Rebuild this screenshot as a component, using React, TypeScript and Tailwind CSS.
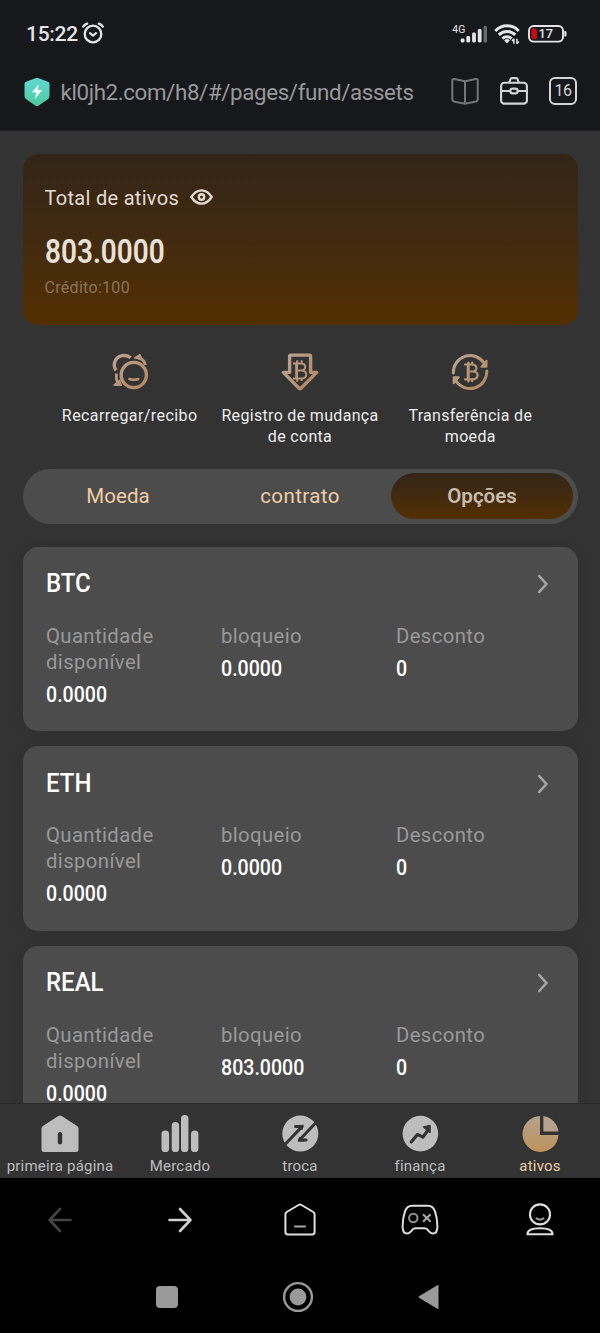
import { useState } from "react"

type Asset = {
  name: string
  available: string
  locked: string
  discount: string
}

const assets: Asset[] = [
  { name: "BTC", available: "0.0000", locked: "0.0000", discount: "0" },
  { name: "ETH", available: "0.0000", locked: "0.0000", discount: "0" },
  { name: "REAL", available: "0.0000", locked: "803.0000", discount: "0" },
]

const tabs = [
  { label: "Moeda", className: "tracking-[0.1px]" },
  { label: "contrato", className: "tracking-[0.4px]" },
  { label: "Opções", className: "tracking-[0px]" },
]

function StatusBar() {
  return (
    <div className="flex h-[68px] items-center justify-between pl-[26px] pr-[33px] text-[#e4e4e6]">
      <div className="flex items-center gap-[3px]">
        <span className="text-[21px] leading-none font-medium tracking-[-0.3px]">15:22</span>
        <svg className="-mt-0.5" width="24" height="22" viewBox="0 0 24 22" fill="none" stroke="currentColor" strokeWidth="2.3" strokeLinecap="round">
          <circle cx="12" cy="12" r="8.3" />
          <path d="M2.2 4.6Q3.6 2.4 6.2 1.6M21.8 4.6Q20.4 2.4 17.8 1.6" />
          <path d="m9 11.2 3 2.4 3-2.4" />
        </svg>
      </div>
      <div className="flex items-center">
        <svg width="36" height="22" viewBox="0 0 36 22" fill="currentColor">
          <text x="0.3" y="9.6" fontSize="10.4" fontFamily="Roboto, sans-serif">4G</text>
          <rect x="8.6" y="15.5" width="4" height="4" rx="1.4" />
          <rect x="14.3" y="13" width="3.8" height="6.5" rx="1.4" />
          <rect x="20.1" y="9.5" width="3.8" height="10" rx="1.4" />
          <rect x="25.8" y="6" width="3.8" height="13.5" rx="1.4" />
          <rect x="31.6" y="3" width="3.4" height="16.5" rx="1.2" fill="#68696c" />
        </svg>
        <svg className="ml-1.5" width="26" height="22" viewBox="0 0 26 22" fill="none" stroke="currentColor" strokeWidth="3">
          <path d="M1.3 7.9a16 16 0 0 1 23.4 0" />
          <path d="M4.8 11.9a11.4 11.4 0 0 1 16.4 0" />
          <path d="M8.4 15.6a6.5 6.5 0 0 1 9.2 0" />
          <path d="M10.2 17.4a4 4 0 0 1 5.6 0L13 20.6z" fill="currentColor" stroke="none" />
          <path d="M19.9 20.8v-5M22.9 15.8v5M18 18l1.9-2.2M24.8 18.6l-1.9 2.2" strokeWidth="1.5" />
        </svg>
        <svg className="ml-[8px]" width="39" height="18" viewBox="0 0 39 18" fill="none">
          <rect x="1" y="1" width="34" height="15.6" rx="4.5" stroke="currentColor" strokeWidth="1.9" />
          <path d="M36.3 6h1q1.2 0 1.2 1v3.6q0 1-1.2 1h-1z" fill="currentColor" />
          <rect x="3.4" y="3.4" width="5.4" height="10.8" rx="2" fill="#d0090d" />
          <text x="10.6" y="13.4" fontSize="12.8" fontWeight="500" fill="currentColor" fontFamily="Roboto, sans-serif">17</text>
        </svg>
      </div>
    </div>
  )
}

function AddressBar() {
  return (
    <div className="flex h-[48px] items-center pl-[23.5px] pr-[23px]">
      <svg width="26" height="30" viewBox="0 0 26 30">
        <defs>
          <linearGradient id="shield" x1="0" y1="0" x2="0" y2="1">
            <stop offset="0" stopColor="#62d8d6" />
            <stop offset="1" stopColor="#4ccb9d" />
          </linearGradient>
        </defs>
        <path d="M11.4 1.2q1.6-.8 3.2 0l9.4 3.6q1.5.6 1.5 2.2v12q0 1.8-1.4 2.9l-9.3 6.5q-1.8 1.2-3.6 0l-9.3-6.5Q.5 20.8.5 19V7q0-1.6 1.5-2.2z" fill="url(#shield)" />
        <path d="M14.6 7.2 7.8 15.6h4.3l-1.4 6.8 7.6-9.4h-4.4z" fill="#eefaf7" />
      </svg>
      <span className="ml-[11px] text-[22.3px] leading-none tracking-[-0.36px] whitespace-nowrap text-[#98999b]">kl0jh2.com/h8/#/pages/fund/assets</span>
      <div className="-mt-0.5 ml-auto flex items-center gap-[21px] text-[#d4d4d6]">
        <svg width="28" height="28" viewBox="0 0 28 28" fill="none" stroke="#757678" strokeWidth="2" strokeLinejoin="round">
          <path d="M14 4.3 3 2Q1.3 1.8 1.3 3.6v19q0 1.4 1.5 1.8L14 26.8l11.2-2.4q1.5-.4 1.5-1.8v-19Q26.7 1.8 25 2z" />
          <path d="M14 4.3v22.5" />
        </svg>
        <svg width="28" height="28" viewBox="0 0 28 28" fill="none" stroke="currentColor" strokeWidth="2.1">
          <rect x="1.1" y="5.8" width="25.8" height="20.8" rx="3.2" />
          <path d="M9.2 5.8 10.5 2q.3-.9 1.3-.9h4.4q1 0 1.3.9l1.3 3.8M1 14h9.5M17.5 14H27" />
          <rect x="10.4" y="11.6" width="7.2" height="4.8" rx="2.2" />
        </svg>
        <div className="flex size-7 items-center justify-center rounded-[6px] border-2 border-[#d4d4d6] text-[16px] leading-none tracking-[-0.6px]">
          16
        </div>
      </div>
    </div>
  )
}

function BalanceCard() {
  const [visible, setVisible] = useState(true)

  return (
    <div className="h-[171px] rounded-[15px] bg-linear-to-b from-[#322517] to-[#532f00] pt-[32px] pl-[22px]">
      <div className="flex h-6 items-center gap-[11px] text-[#e2dbd2]">
        <span className="text-[20px] leading-6 tracking-[0.3px]">Total de ativos</span>
        <button className="-mt-[3px]" onClick={() => setVisible(!visible)}>
          <svg width="23" height="16" viewBox="0 0 23 16" fill="none" stroke="currentColor" strokeWidth="2.4">
            <path d="M1.4 8Q5.5 1.4 11.5 1.4T21.6 8Q17.5 14.6 11.5 14.6T1.4 8z" />
            <circle cx="11.5" cy="8" r="2.7" />
          </svg>
        </button>
      </div>
      <div className="mt-[24px] h-9 origin-left scale-x-86 text-[32.5px] leading-9 font-semibold text-[#e8e1da]">
        {visible ? "803.0000" : "******"}
      </div>
      <div className="mt-2 text-[16px] leading-5 tracking-[0.3px] text-[#89745c]">Crédito:100</div>
    </div>
  )
}

function CoinGradient({ id }: { id: string }) {
  return (
    <defs>
      <linearGradient id={id} x1="0" y1="0" x2="38" y2="38" gradientUnits="userSpaceOnUse">
        <stop offset="0.15" stopColor="#b9a08c" />
        <stop offset="1" stopColor="#b1865a" />
      </linearGradient>
    </defs>
  )
}

function RechargeIcon() {
  return (
    <svg width="38" height="38" viewBox="0 0 38 38" fill="none" stroke="url(#g1)" strokeWidth="3.4" strokeLinejoin="round">
      <CoinGradient id="g1" />
      <circle cx="22.8" cy="22" r="12.6" />
      <path d="M18.4 26q4.4 1.6 8.8 0" strokeWidth="2.6" strokeLinecap="round" />
      <path d="M5 17.4A9.6 9.6 0 0 1 3.6 9.6q1.4-5.8 7.6-7 5.2-.8 8.4 2.2" />
      <path d="M5.4 20.5q-.6 5.5 1.2 9.5" strokeWidth="2.8" />
      <path d="M3.2 32.2h7l-1.6-5z" fill="url(#g1)" strokeWidth="1.6" />
      <path d="M27 5q6 .8 7.4 7" strokeWidth="3" />
      <path d="m23.8 5 5.2-3.2 1.4 4z" fill="url(#g1)" strokeWidth="1.6" />
    </svg>
  )
}

function RecordIcon() {
  return (
    <svg width="38" height="38" viewBox="0 0 38 38" fill="none" stroke="url(#g2)" strokeWidth="3.4" strokeLinejoin="round">
      <CoinGradient id="g2" />
      <path d="M8.6 3.3q0-1.2 1.2-1.2h18.6q1.2 0 1.2 1.2V19.4h6.2L20 35.2q-1 .9-2 0L2.4 19.4h6.2z" />
      <path d="M15.6 10v16" strokeWidth="2.8" />
      <path d="M12 10.6h8.4q3.8.4 3.8 3.4t-4 3.4h-4M20.2 17.4q5 0 5 4t-5 4H12M16.2 7.2v3.4M20.6 7.2v3.4M16.2 25.4v3.4M20.6 25.4v2.6" strokeWidth="2" />
    </svg>
  )
}

function TransferIcon() {
  return (
    <svg width="38" height="38" viewBox="0 0 38 38" fill="none" stroke="url(#g3)" strokeWidth="3" strokeLinecap="round" strokeLinejoin="round">
      <CoinGradient id="g3" />
      <path d="M2.3 20A16.8 16.8 0 0 1 33 10" />
      <path d="M35.8 18A16.8 16.8 0 0 1 5 28" />
      <path d="M35.6 7.6v6.2h-5.4zM2.6 30.4v-6.2H8z" fill="url(#g3)" strokeWidth="1.8" />
      <path d="M17.2 11.5v15" strokeWidth="3" />
      <path d="M14 11.5h7.4q4 .3 4 3.4t-4 3.6h-4M21.6 18.5q5 0 5 3.8t-5 4H14M17.4 9.6v2M21.2 9.6v2M17.4 26v2.6M21.2 26v2.2" strokeWidth="2.2" />
    </svg>
  )
}

function Actions() {
  return (
    <div className="mt-[28px] grid h-[94px] grid-cols-3 px-[22px] text-center text-[16px] leading-[21px] text-[#ececec]">
      <div className="flex flex-col items-center">
        <RechargeIcon />
        <span className="mt-[14px] tracking-[0.42px] whitespace-nowrap">Recarregar/recibo</span>
      </div>
      <div className="flex flex-col items-center">
        <RecordIcon />
        <span className="mt-[14px] tracking-[0.32px] whitespace-nowrap">Registro de mudança<br />de conta</span>
      </div>
      <div className="flex flex-col items-center">
        <TransferIcon />
        <span className="mt-[14px] tracking-[0.32px] whitespace-nowrap">Transferência de<br />moeda</span>
      </div>
    </div>
  )
}

function TabSwitch() {
  const [active, setActive] = useState("Opções")

  return (
    <div className="mt-[21.5px] grid h-[55px] grid-cols-3 rounded-full bg-[#4c4c4c] p-[4.5px]">
      {tabs.map((tab) => (
        <button
          key={tab.label}
          onClick={() => setActive(tab.label)}
          className={`rounded-full pt-px text-[20.5px] leading-none ${tab.className} ${
            active === tab.label
              ? "bg-linear-to-b from-[#322517] to-[#532f00] font-semibold text-[#c9bcae]"
              : "text-[#efcca4]"
          }`}
        >
          {tab.label}
        </button>
      ))}
    </div>
  )
}

function AssetField({ label, value }: { label: string; value: string }) {
  return (
    <div>
      <div className="pr-8 text-[20.3px] leading-[26px] tracking-[0.4px] text-[#999999]">{label}</div>
      <div className="mt-[7px] origin-left scale-x-89 text-[22px] leading-[26px] font-medium text-white">{value}</div>
    </div>
  )
}

function AssetCard({ asset }: { asset: Asset }) {
  return (
    <div className="h-[184.5px] shrink-0 rounded-[15px] bg-[#4c4c4c] px-[23.5px] pt-[23px] shadow-[0_0_14px_rgba(0,0,0,0.12)]">
      <div className="flex h-[29px] items-center justify-between">
        <span className="origin-left scale-x-94 text-[25.5px] leading-none font-medium text-white">{asset.name}</span>
        <svg className="mr-[5px]" width="12" height="20" viewBox="0 0 12 20" fill="none" stroke="#a5a5a5" strokeWidth="2.6" strokeLinecap="round">
          <path d="m2.2 2 7.2 8-7.2 8" />
        </svg>
      </div>
      <div className="mt-[24px] grid grid-cols-[175px_175px_1fr]">
        <AssetField label="Quantidade disponível" value={asset.available} />
        <AssetField label="bloqueio" value={asset.locked} />
        <AssetField label="Desconto" value={asset.discount} />
      </div>
    </div>
  )
}

function AppTabBar() {
  return (
    <nav className="grid h-[75px] shrink-0 grid-cols-5 border-t border-[#292929] bg-[#333333] pt-[11px] text-[15px] leading-5 tracking-[0.2px] text-[#bdbdbd]">
      <div className="flex flex-col items-center">
        <svg width="40" height="38" viewBox="0 0 40 38">
          <path d="M18.3 1q1.7-1.2 3.4 0l15.4 10q1.4 1 1.4 2.6V34.5q0 2.5-2.5 2.5H4Q1.5 37 1.5 34.5V13.6q0-1.6 1.4-2.6z" fill="#bdbdbd" />
          <rect x="17.8" y="17" width="4.4" height="12.5" rx="2.2" fill="#333333" />
        </svg>
        <span className="mt-[3px] whitespace-nowrap">primeira página</span>
      </div>
      <div className="flex flex-col items-center">
        <svg width="40" height="38" viewBox="0 0 40 38" fill="#bdbdbd">
          <rect x="1.5" y="15.5" width="7.6" height="21.5" rx="3.6" />
          <rect x="11.7" y="7" width="7.4" height="30" rx="3.6" />
          <rect x="21" y="0" width="7.4" height="37" rx="3.6" />
          <rect x="31" y="15.5" width="7.4" height="21.5" rx="3.6" />
        </svg>
        <span className="mt-[3px]">Mercado</span>
      </div>
      <div className="flex flex-col items-center">
        <svg width="40" height="38" viewBox="0 0 40 38" fill="none" stroke="#333333" strokeWidth="3" strokeLinecap="round" strokeLinejoin="round">
          <circle cx="20.3" cy="18.6" r="18" fill="#bdbdbd" stroke="none" />
          <path d="M4 30.5 22 11.6h-6.5M36.5 7 19.5 25h6.6" />
          <path d="m17.5 10.9 5.5-.4-1 3.6zM24 25.7l-5.5.4 1-3.6z" fill="#333333" strokeWidth="1.4" />
        </svg>
        <span className="mt-[3px]">troca</span>
      </div>
      <div className="flex flex-col items-center">
        <svg width="40" height="38" viewBox="0 0 40 38" fill="none" stroke="#333333" strokeWidth="3.2" strokeLinecap="round" strokeLinejoin="round">
          <circle cx="20.4" cy="18.6" r="17.8" fill="#bdbdbd" stroke="none" />
          <path d="m11.2 27 6.4-7.6 5.2 2.8 5.4-7.3" />
          <path d="m23.5 11.9 6.5-1.3v6.8z" fill="#333333" strokeWidth="1.5" />
        </svg>
        <span className="mt-[3px]">finança</span>
      </div>
      <div className="flex flex-col items-center text-[#efcca4]">
        <svg width="40" height="38" viewBox="0 0 40 38">
          <defs>
            <linearGradient id="pie" x1="0" y1="0" x2="0" y2="1">
              <stop offset="0" stopColor="#b5a18c" />
              <stop offset="1" stopColor="#bd935d" />
            </linearGradient>
          </defs>
          <path d="M20 1V20h18.5A18 18 0 1 1 20 1z" fill="url(#pie)" />
          <path d="M23.4 1A18 18 0 0 1 38.4 16.6h-15z" fill="#b5a18c" />
        </svg>
        <span className="mt-[3px]">ativos</span>
      </div>
    </nav>
  )
}

function BrowserToolbar() {
  return (
    <div className="grid h-[83px] shrink-0 grid-cols-5 place-items-center text-[#dedede]">
      <svg width="40" height="36" viewBox="0 0 40 36" fill="none" stroke="#444444" strokeWidth="2.6" strokeLinecap="round" strokeLinejoin="round">
        <path d="M30.5 18H9.5M20 7 9.5 18 20 29" />
      </svg>
      <svg width="40" height="36" viewBox="0 0 40 36" fill="none" stroke="#d0d0d0" strokeWidth="2.6" strokeLinecap="round" strokeLinejoin="round">
        <path d="M9.5 18h21M20 7l10.5 11L20 29" />
      </svg>
      <svg width="40" height="36" viewBox="0 0 40 36" fill="none" stroke="currentColor" strokeWidth="2" strokeLinecap="round" strokeLinejoin="round">
        <path d="M18.5 3q1.5-.9 3 0l11.8 7q1.3.8 1.3 2.4V30q0 2.4-2.4 2.4H7.8q-2.4 0-2.4-2.4V12.4q0-1.6 1.3-2.4z" />
        <path d="M15 24.5h10" stroke="#aaaaaa" />
      </svg>
      <svg width="40" height="36" viewBox="0 0 40 36" fill="none" stroke="currentColor" strokeWidth="2" strokeLinejoin="round">
        <path d="M12 3.8h16q5 0 7 5.6 2.4 7 2.4 15 0 7-4.6 7-2.2 0-4-2.3-2-2.8-4.2-2.8h-9.2q-2.2 0-4.2 2.8-1.8 2.3-4 2.3-4.6 0-4.6-7 0-8 2.4-15 2-5.6 7-5.6z" />
        <circle cx="13.3" cy="16" r="4.2" stroke="#929292" />
        <path d="m23 12.2 7.6 7.6M30.6 12.2 23 19.8" stroke="#aaaaaa" />
      </svg>
      <svg width="40" height="36" viewBox="0 0 40 36" fill="none" stroke="currentColor" strokeWidth="2.1" strokeLinecap="round" strokeLinejoin="round">
        <circle cx="20" cy="12.4" r="10" />
        <path d="M16.6 16.4q3.4 2.4 6.8 0" stroke="#999999" />
        <path d="M7.4 32.2q0-6 12.6-6t12.6 6z" />
      </svg>
    </div>
  )
}

function SystemNav() {
  return (
    <div className="flex h-[72px] shrink-0 items-center pl-[156px] text-[#999999]">
      <div className="size-[22px] rounded-[4px] bg-[#999999]" />
      <svg className="ml-[104px]" width="32" height="32" viewBox="0 0 32 32">
        <circle cx="16" cy="16" r="13.9" fill="none" stroke="currentColor" strokeWidth="2.4" />
        <circle cx="16" cy="16" r="8.4" fill="currentColor" />
      </svg>
      <svg className="ml-[103px]" width="23" height="26" viewBox="0 0 23 26">
        <path d="M2 12.2 20.3 1.2q1.2-.6 1.2.8v22q0 1.4-1.2.8L2 13.8q-1.3-.8 0-1.6z" fill="currentColor" />
      </svg>
    </div>
  )
}

export default function App() {
  return (
    <div className="flex h-[1333px] w-[600px] flex-col overflow-hidden bg-black font-['Roboto',sans-serif]">
      <header className="h-[131px] shrink-0 border-b border-[#202123] bg-[#17181c]">
        <StatusBar />
        <AddressBar />
      </header>
      <main className="h-[972px] shrink-0 overflow-hidden bg-[#333333] px-[22.5px] pt-[23px]">
        <BalanceCard />
        <Actions />
        <TabSwitch />
        <div className="mt-[23px] flex flex-col gap-[15px]">
          {assets.map((asset) => (
            <AssetCard key={asset.name} asset={asset} />
          ))}
        </div>
      </main>
      <AppTabBar />
      <BrowserToolbar />
      <SystemNav />
    </div>
  )
}
